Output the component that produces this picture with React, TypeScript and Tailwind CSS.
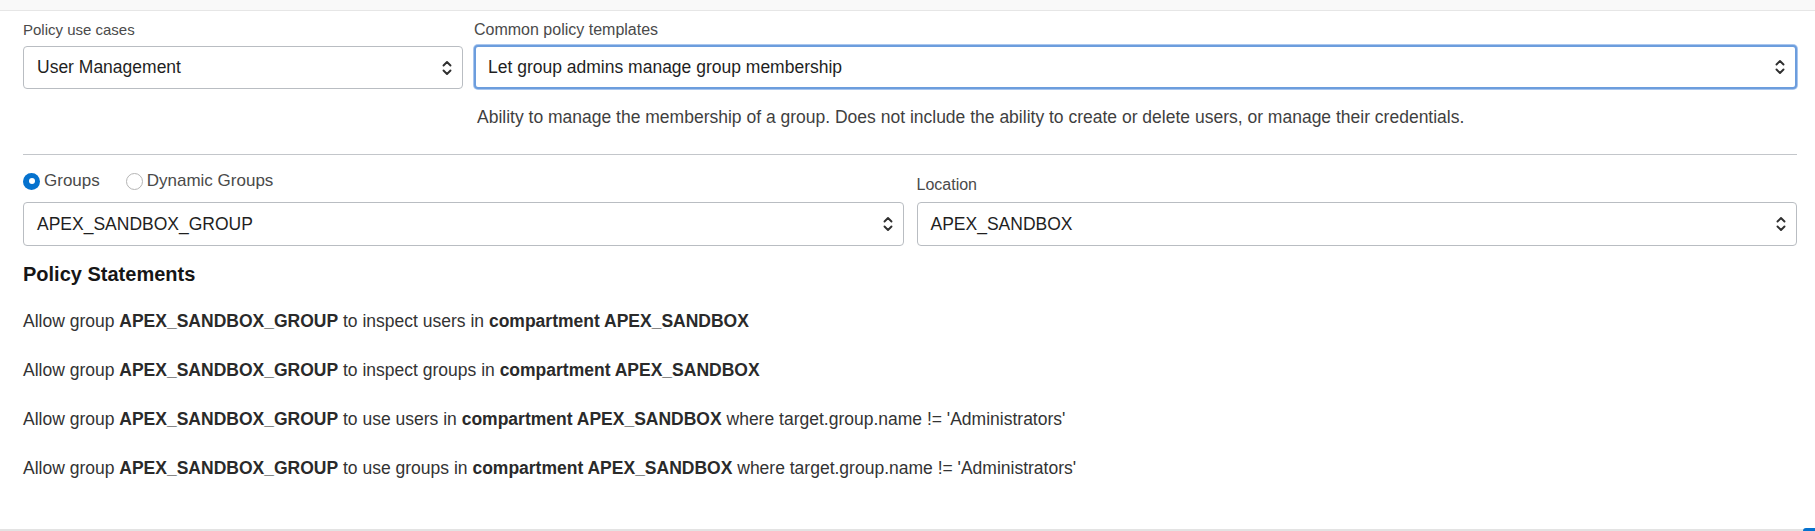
import { useState } from "react";

const font = { fontFamily: '"Liberation Sans", Arial, sans-serif' };

function Chevrons() {
  return (
    <svg width="12" height="18" viewBox="0 0 12 18" fill="none" stroke="#2f2f2f" strokeWidth="1.9" strokeLinecap="round" strokeLinejoin="round">
      <path d="M2.5 6.5 L6 3 L9.5 6.5" />
      <path d="M2.5 11.5 L6 15 L9.5 11.5" />
    </svg>
  );
}

function Select({ value, focused = false, tall = false }: { value: string; focused?: boolean; tall?: boolean }) {
  return (
    <div
      className={`flex items-center justify-between ${tall ? "h-[44px]" : "h-[43px]"} rounded-[4px] bg-white pl-[13px] pr-[9px] text-[17.5px] text-[#1f1f1f] ${
        focused
          ? "border-2 border-[#6c9ddd] shadow-[0_0_0_1px_#a9c6ee]"
          : "border border-[#b9bdc2]"
      }`}
    >
      <span className={focused ? "-ml-px" : ""}>{value}</span>
      <Chevrons />
    </div>
  );
}

function Radio({ checked, label, onClick }: { checked: boolean; label: string; onClick: () => void }) {
  return (
    <button onClick={onClick} className="flex items-center gap-[4px] text-[17px] text-[#4a4a4a]">
      {checked ? (
        <span className="flex items-center justify-center w-[17px] h-[17px] rounded-full bg-[#0572ce]">
          <span className="w-[6px] h-[6px] rounded-full bg-white" />
        </span>
      ) : (
        <span className="w-[17px] h-[17px] rounded-full border border-[#b5b5b5] bg-white" />
      )}
      {label}
    </button>
  );
}

const statements = [
  { verb: "inspect users", where: false },
  { verb: "inspect groups", where: false },
  { verb: "use users", where: true },
  { verb: "use groups", where: true },
];

export default function App() {
  const [kind, setKind] = useState("groups");

  return (
    <div className="min-h-[531px] bg-white relative" style={font}>
      {/* top strip */}
      <div className="h-[11px] bg-[#f9f9f9] border-b border-[#e6e6e6]" />

      <div className="pl-[23px] pr-[18px] pt-[10px]">
        {/* use case + template */}
        <div className="flex gap-[11px]">
          <div className="w-[440px] shrink-0">
            <div className="text-[15px] text-[#4a4a4a] leading-[18px] mb-[7px]">Policy use cases</div>
            <Select value="User Management" />
          </div>
          <div className="flex-1">
            <div className="text-[16px] text-[#4a4a4a] leading-[18px] mb-[6px]">Common policy templates</div>
            <Select value="Let group admins manage group membership" focused tall />
            <p className="mt-[18px] text-[17.5px] text-[#3f3f3f] leading-[20px] pl-[3px]">
              Ability to manage the membership of a group. Does not include the ability to create or delete users, or manage their credentials.
            </p>
          </div>
        </div>

        <div className="mt-[27px] border-t border-[#c3c6ca]" />

        {/* group + location */}
        <div className="flex gap-[13px] mt-[17px]">
          <div className="flex-1">
            <div className="flex items-center gap-[26px] h-[18px] mb-[12px]">
              <Radio checked={kind === "groups"} label="Groups" onClick={() => setKind("groups")} />
              <Radio checked={kind === "dynamic"} label="Dynamic Groups" onClick={() => setKind("dynamic")} />
            </div>
            <Select value="APEX_SANDBOX_GROUP" tall />
          </div>
          <div className="flex-1">
            <div className="text-[16px] text-[#4a4a4a] leading-[18px] mt-[4px] mb-[8px]">Location</div>
            <Select value="APEX_SANDBOX" tall />
          </div>
        </div>

        {/* statements */}
        <h2 className="mt-[17px] text-[20px] font-bold text-[#161616] leading-[22px]">Policy Statements</h2>
        <div className="mt-[26px] flex flex-col gap-[29px] text-[17.5px] text-[#333333] leading-[20px]">
          {statements.map((s) => (
            <p key={s.verb}>
              Allow group <b className="text-[#2a2a2a]">APEX_SANDBOX_GROUP</b> to {s.verb} in{" "}
              <b className="text-[#2a2a2a]">compartment APEX_SANDBOX</b>
              {s.where && " where target.group.name != 'Administrators'"}
            </p>
          ))}
        </div>
      </div>

      {/* bottom edge */}
      <div className="absolute left-0 right-0 bottom-0 h-[2px] bg-[#e3e3e3]" />
      <div className="absolute right-0 bottom-0 w-[12px] h-[3px] rounded-tl-[3px] bg-[#0572ce]" />
    </div>
  );
}
